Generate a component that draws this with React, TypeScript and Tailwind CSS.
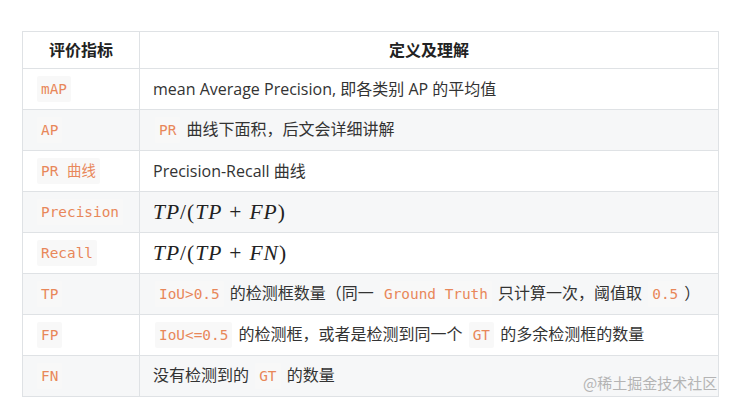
const sans = { fontFamily: '"Open Sans", "Noto Sans CJK SC", sans-serif' };

function Code({ children }: { children: React.ReactNode }) {
  return (
    <code className="mx-[2px] inline-block rounded-[2px] bg-[#f8f8f8] px-[4px] text-[14.4px] leading-[26px] text-[#e8875a] font-['DejaVu_Sans_Mono','Noto_Sans_CJK_SC',monospace]">
      {children}
    </code>
  );
}

function Frac({ last }: { last: string }) {
  return (
    <span className="text-[21.5px] leading-[26px] tracking-[1px] text-[#222] font-['Liberation_Serif',serif]">
      <i>TP</i>/(<i>TP</i>
      <span className="mx-[7px]">+</span>
      <i>{last}</i>)
    </span>
  );
}

const rows: { term: React.ReactNode; desc: React.ReactNode }[] = [
  { term: <Code>mAP</Code>, desc: <>mean Average Precision, 即各类别 AP 的平均值</> },
  { term: <Code>AP</Code>, desc: <><Code>PR</Code> 曲线下面积，后文会详细讲解</> },
  { term: <Code>PR 曲线</Code>, desc: <>Precision-Recall 曲线</> },
  { term: <Code>Precision</Code>, desc: <Frac last="FP" /> },
  { term: <Code>Recall</Code>, desc: <Frac last="FN" /> },
  {
    term: <Code>TP</Code>,
    desc: (
      <>
        <Code>IoU&gt;0.5</Code> 的检测框数量（同一 <Code>Ground Truth</Code> 只计算一次，阈值取 <Code>0.5</Code>）
      </>
    ),
  },
  {
    term: <Code>FP</Code>,
    desc: (
      <>
        <Code>IoU&lt;=0.5</Code> 的检测框，或者是检测到同一个 <Code>GT</Code> 的多余检测框的数量
      </>
    ),
  },
  { term: <Code>FN</Code>, desc: <>没有检测到的 <Code>GT</Code> 的数量</> },
];

export default function App() {
  return (
    <div className="relative h-[416px] w-[734px] overflow-hidden bg-white pl-[22px] pt-[31px]" style={sans}>
      <table className="border-collapse text-[16px] text-[#333]">
        <thead>
          <tr className="h-[37px]">
            <th className="w-[117px] border border-[#dfe2e5] text-center font-bold text-[#222]">评价指标</th>
            <th className="w-[579px] border border-[#dfe2e5] text-center font-bold text-[#222]">定义及理解</th>
          </tr>
        </thead>
        <tbody>
          {rows.map((r, i) => (
            <tr key={i} className={`h-[41px] ${i % 2 === 1 ? "bg-[#f6f7f8]" : "bg-white"}`}>
              <td className="whitespace-nowrap border border-[#dfe2e5] pl-[12px] align-middle">{r.term}</td>
              <td className="whitespace-nowrap border border-[#dfe2e5] pl-[13px] align-middle">{r.desc}</td>
            </tr>
          ))}
        </tbody>
      </table>
      <div className="absolute left-[583px] top-[372px] text-[15px] leading-[22px] text-[#b4b4b4] font-['Noto_Sans_CJK_SC',sans-serif]">
        @稀土掘金技术社区
      </div>
    </div>
  );
}
